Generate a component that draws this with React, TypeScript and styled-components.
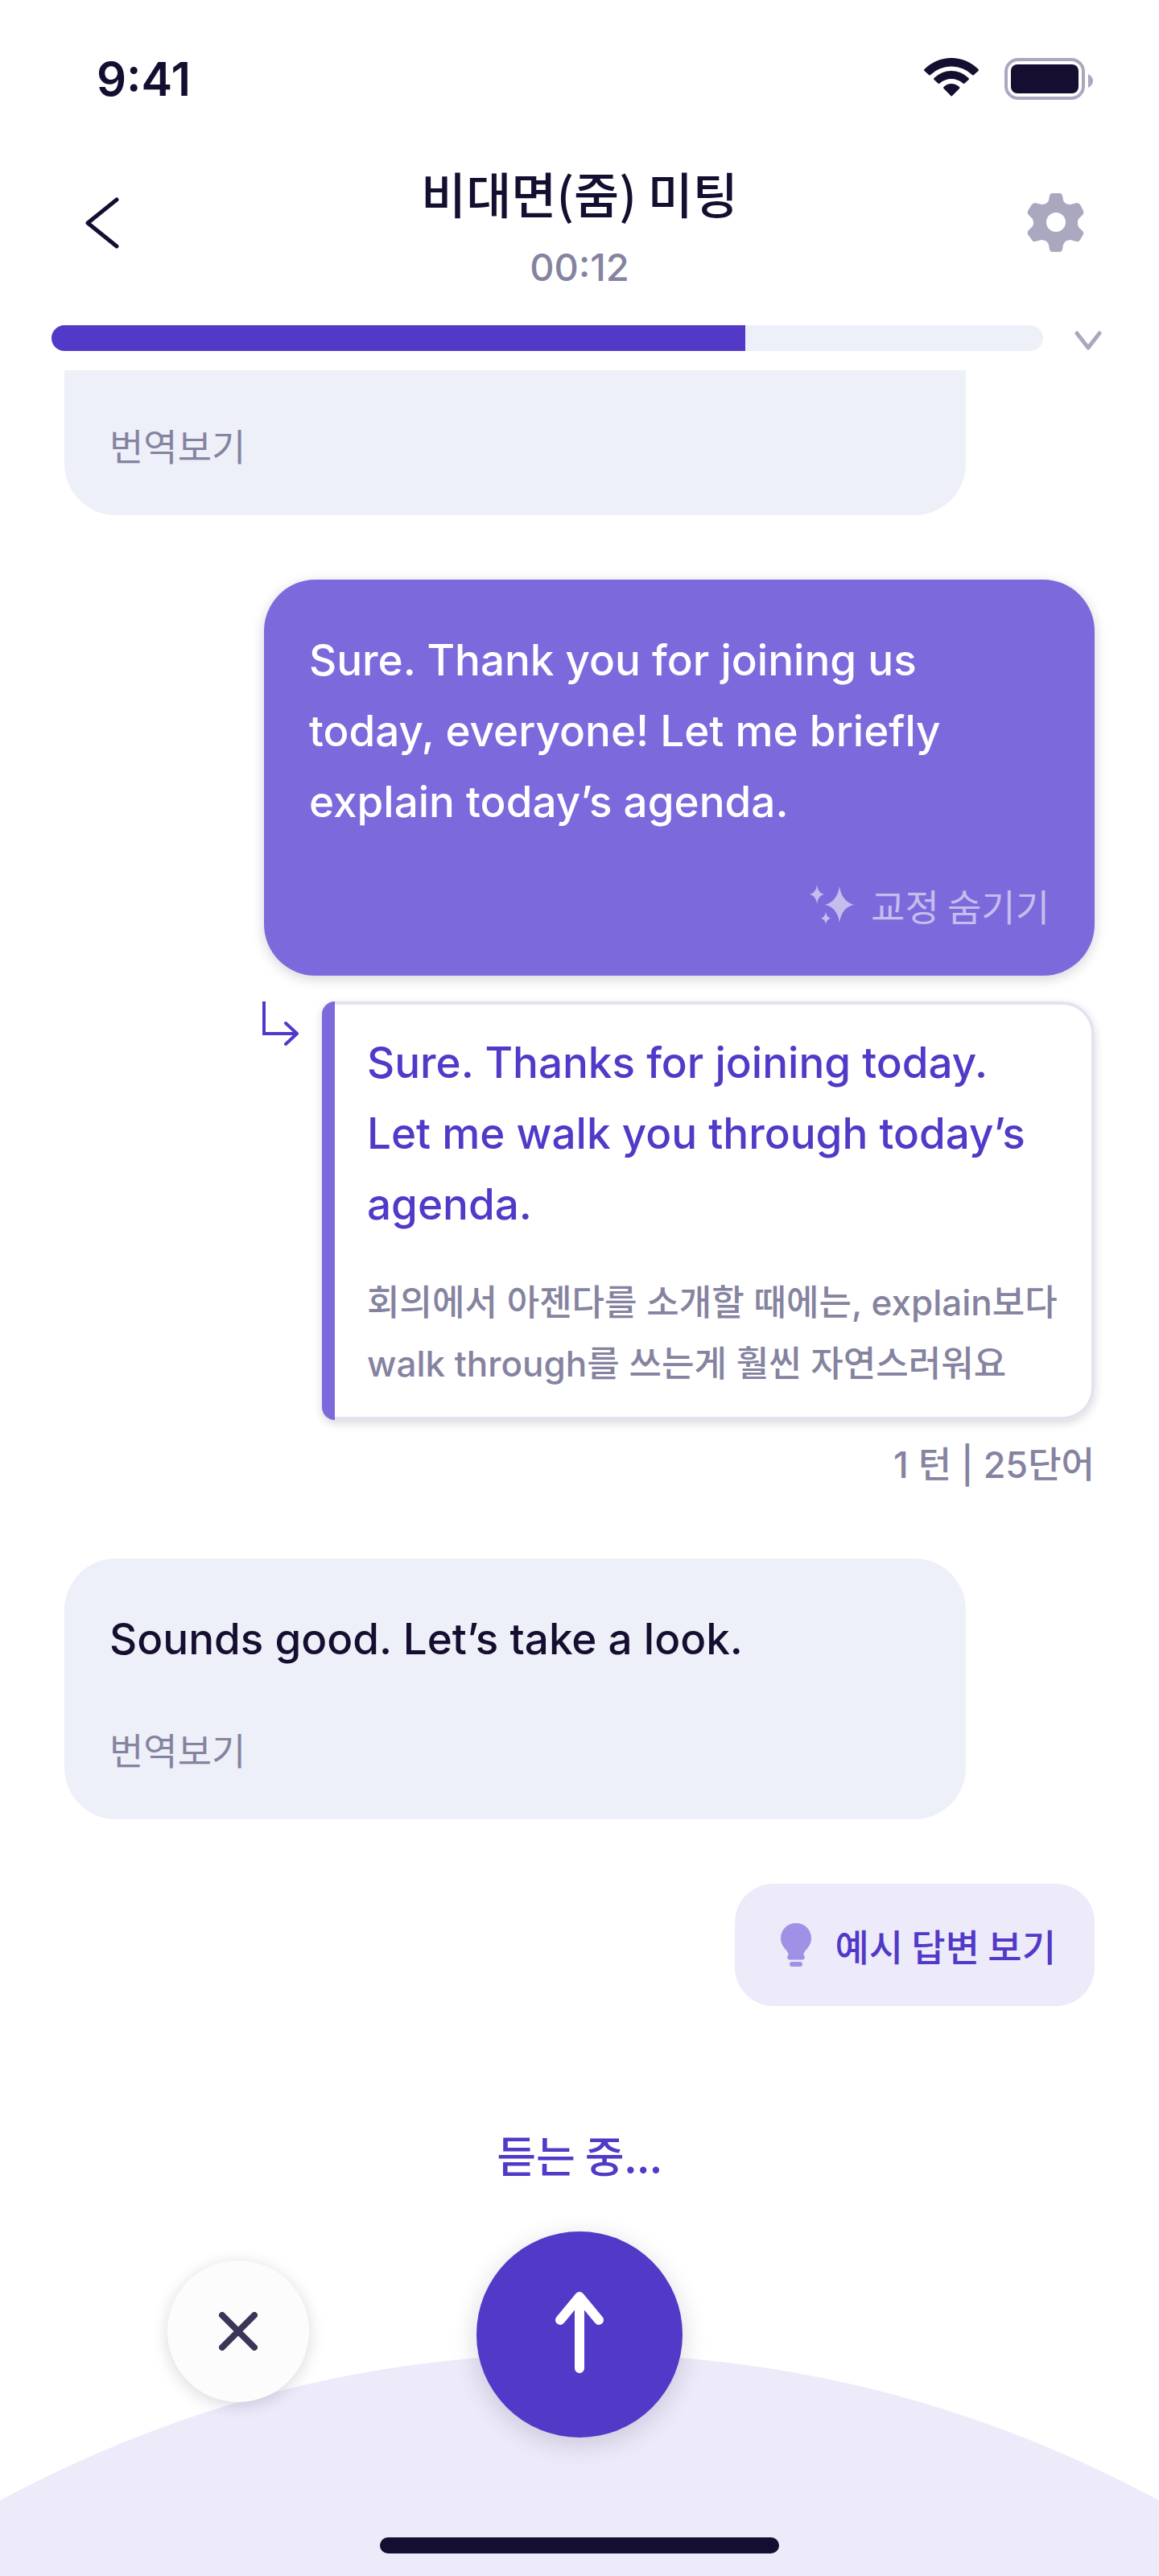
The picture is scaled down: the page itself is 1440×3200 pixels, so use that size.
import React from 'react';
import styled, { createGlobalStyle } from 'styled-components';

const ink = '#150e30';
const muted = '#8583a0';
const faint = '#a9a8bf';
const primary = '#5239c8';
const violet = '#7c69dc';
const mist = '#edf0f8';
const lilac = '#edeafa';
const korean = "'Noto Sans CJK KR', sans-serif";
const latin = "Inter, 'Noto Sans CJK KR', sans-serif";

const GlobalStyle = createGlobalStyle`
  *, *::before, *::after { box-sizing: border-box; }
  body { margin: 0; background: #fff; color: ${ink}; font-family: ${latin}; }
  button { border: 0; padding: 0; background: none; color: inherit; font: inherit; cursor: pointer; }
  h1, p { margin: 0; font-weight: inherit; }
  svg { display: block; flex: none; }
`;

const Screen = styled.div`
  display: flex;
  flex-direction: column;
  min-height: 100vh;
  overflow: hidden;
`;

const StatusBar = styled.div`
  display: flex;
  align-items: center;
  justify-content: space-between;
  height: 192px;
  padding: 4px 82px 0 120px;
`;

const Clock = styled.time`
  font-size: 58px;
  line-height: 72px;
  font-weight: 600;
`;

const StatusIcons = styled.div`
  display: flex;
  align-items: flex-start;
  gap: 32px;
`;

const Header = styled.header`
  display: flex;
  align-items: center;
  justify-content: space-between;
  height: 168px;
  padding: 2px 80px 0;
`;

const IconButton = styled.button`
  display: grid;
  place-items: center;
  width: 96px;
  height: 96px;
`;

const Heading = styled.div`
  display: flex;
  flex-direction: column;
  align-items: center;
  gap: 10px;
  padding-top: 8px;
`;

const Title = styled.h1`
  font-family: ${korean};
  font-size: 61px;
  line-height: 92px;
  font-weight: 500;
`;

const Timer = styled.time`
  font-size: 47px;
  line-height: 72px;
  font-weight: 500;
  color: ${muted};
`;

const ProgressRow = styled.div`
  display: flex;
  align-items: center;
  gap: 16px;
  height: 100px;
  padding: 20px 48px 0 64px;
`;

const Track = styled.div`
  flex: 1;
  height: 32px;
  border-radius: 16px;
  background: ${mist};
  overflow: hidden;
`;

const Fill = styled.div`
  height: 100%;
  background: ${primary};
`;

const ExpandButton = styled.button`
  display: grid;
  place-items: center;
  width: 80px;
  height: 32px;
`;

const Chat = styled.main`
  display: flex;
  flex-direction: column;
  align-items: flex-start;
  gap: 80px;
  padding: 0 80px;
`;

const Incoming = styled.section<{ $cut?: boolean }>`
  display: flex;
  flex-direction: column;
  align-items: flex-start;
  gap: 56px;
  width: 1120px;
  max-width: 100%;
  padding: 56px 56px 52px;
  border-radius: ${(p) => (p.$cut ? '0 0 64px 64px' : '64px')};
  background: ${mist};
`;

const Message = styled.p`
  font-size: 53px;
  line-height: 88px;
  font-weight: 500;
`;

const TextButton = styled.button`
  display: flex;
  align-items: center;
  gap: 20px;
  color: ${muted};
  font-family: ${korean};
  font-size: 46px;
  line-height: 72px;
  font-weight: 400;
`;

const Turn = styled.section`
  display: flex;
  flex-direction: column;
  align-items: flex-end;
  align-self: stretch;
`;

const Outgoing = styled.div`
  display: flex;
  flex-direction: column;
  gap: 48px;
  width: 1032px;
  max-width: 100%;
  padding: 56px 56px 52px;
  border-radius: 64px;
  background: ${violet};
  color: #fff;
  box-shadow: 0 4px 16px rgba(21, 14, 48, 0.18);

  ${TextButton} {
    align-self: flex-end;
    color: #c5bdec;
  }
`;

const Correction = styled.div`
  display: flex;
  align-items: flex-start;
  gap: 28px;
  width: 1034px;
  max-width: 100%;
  margin-top: 32px;
`;

const Card = styled.div`
  flex: 1;
  display: flex;
  border-radius: 16px 40px 40px 16px;
  background: #fff;
  overflow: hidden;
  box-shadow: 0 4px 12px rgba(21, 14, 48, 0.16);
`;

const CardEdge = styled.div`
  flex: none;
  width: 16px;
  background: ${violet};
`;

const CardBody = styled.div`
  flex: 1;
  display: flex;
  flex-direction: column;
  gap: 40px;
  padding: 28px 32px 28px 40px;
  border: 4px solid #e4e2f0;
  border-left: 0;
  border-radius: 0 40px 40px 0;
`;

const Better = styled(Message)`
  color: ${primary};
`;

const Note = styled.p`
  color: ${muted};
  font-size: 44px;
  line-height: 76px;
  font-weight: 500;
`;

const Stats = styled.p`
  margin-top: 20px;
  color: ${muted};
  font-size: 45px;
  line-height: 72px;
  font-weight: 500;
`;

const HintButton = styled.button`
  display: flex;
  align-items: center;
  align-self: flex-end;
  gap: 20px;
  height: 152px;
  padding: 0 48px;
  border-radius: 48px;
  background: ${lilac};
  color: ${primary};
  font-family: ${korean};
  font-size: 46px;
  line-height: 72px;
  font-weight: 500;
`;

const Dock = styled.footer`
  position: relative;
  flex: 1;
  display: flex;
  flex-direction: column;
  align-items: center;
  margin-top: 136px;
`;

const Dome = styled.svg`
  position: absolute;
  left: 0;
  bottom: 0;
  width: 100%;
  height: 276px;
`;

const Listening = styled.p`
  color: ${primary};
  font-family: ${korean};
  font-size: 53px;
  line-height: 96px;
  font-weight: 500;
`;

const Controls = styled.div`
  position: relative;
  display: grid;
  grid-template-columns: 1fr 256px 1fr;
  align-items: center;
  justify-items: center;
  align-self: stretch;
  margin-top: 48px;
`;

const Side = styled.div`
  padding-bottom: 8px;
`;

const RoundButton = styled.button<{ $size: number; $main?: boolean }>`
  display: grid;
  place-items: center;
  width: ${(p) => p.$size}px;
  height: ${(p) => p.$size}px;
  border-radius: 50%;
  background: ${(p) => (p.$main ? primary : '#fcfcfd')};
  box-shadow: ${(p) => (p.$main ? '0 8px 32px' : '0 4px 20px')} rgba(21, 14, 48, 0.16);
`;

const HomeBar = styled.div`
  position: relative;
  width: 496px;
  height: 20px;
  margin-top: auto;
  margin-bottom: 28px;
  border-radius: 10px;
  background: ${ink};
`;

export default function App() {
  const progress = 70;
  return (
    <Screen>
      <GlobalStyle />
      <StatusBar>
        <Clock>9:41</Clock>
        <StatusIcons>
          <svg width="68" height="48" viewBox="0 0 68 48" fill={ink} aria-hidden="true">
            <path d="M0.500 14Q15 0 34 0T67.500 14Q68.500 15 67.500 16L62 21Q61 22 60 21Q49 10.500 34 10.500T8 21Q7 22 6 21L0.500 16Q-0.500 15 0.500 14Z" />
            <path d="M12.500 25Q22 16 34 16T55.500 25Q56.500 26 55.500 27L50.500 31.500Q49.500 32.500 48.500 31.500Q42 26 34 26T19.500 31.500Q18.500 32.500 17.500 31.500L12.500 27Q11.500 26 12.500 25Z" />
            <path d="M24.500 36Q28.500 32 34 32T44 36Q45 37 44 38L35 47Q34.200 48 33.400 47L24.500 38Q23.500 37 24.500 36Z" />
          </svg>
          <svg width="110" height="52" viewBox="0 0 110 52" aria-hidden="true">
            <rect x="2" y="2" width="96" height="48" rx="15" fill="none" stroke={faint} strokeWidth="4" />
            <rect x="8" y="8" width="84" height="36" rx="8" fill={ink} />
            <path d="M104 20Q110 23 110 28.500Q110 34 104 37Z" fill={faint} />
          </svg>
        </StatusIcons>
      </StatusBar>

      <Header>
        <IconButton aria-label="뒤로">
          <svg width="44" height="64" viewBox="2 0 44 64" fill="none" stroke={ink} strokeWidth="5" strokeLinecap="round" strokeLinejoin="round" aria-hidden="true">
            <path d="M41 3L5 32L41 61" />
          </svg>
        </IconButton>
        <Heading>
          <Title>비대면(줌) 미팅</Title>
          <Timer>00:12</Timer>
        </Heading>
        <IconButton aria-label="설정">
          <svg width="72" height="74" viewBox="0 0 72 74" aria-hidden="true">
            <path fill={faint} fillRule="evenodd" d="M31 0H41Q43 0 44 3L45 9Q47 14 54 14L62 12Q64 12 66 14L70 22Q71 25 69 27L64 32Q62 37 64 42L69 47Q71 49 70 51L66 58Q64 61 61 60L54 58Q47 58 45 64L44 70Q43 73 41 73H31Q29 73 28 70L27 64Q25 58 18 58L10 60Q8 61 6 58L1 51Q0 48 2 46L7 41Q9 37 7 32L2 27Q0 25 1 22L6 14Q8 12 10 12L18 14Q25 14 27 9L28 3Q29 0 31 0ZM36 24A12 12 0 1 0 36 48A12 12 0 1 0 36 24Z" />
          </svg>
        </IconButton>
      </Header>

      <ProgressRow>
        <Track role="progressbar" aria-label="진행률" aria-valuenow={progress} aria-valuemin={0} aria-valuemax={100}>
          <Fill style={{ width: `${progress}%` }} />
        </Track>
        <ExpandButton aria-label="펼치기">
          <svg width="34" height="30" viewBox="0 -6 34 30" fill="none" stroke={faint} strokeWidth="5" strokeLinecap="round" strokeLinejoin="round" aria-hidden="true">
            <path d="M3 3L17 21L31 3" />
          </svg>
        </ExpandButton>
      </ProgressRow>

      <Chat>
        <Incoming $cut>
          <TextButton>번역보기</TextButton>
        </Incoming>

        <Turn>
          <Outgoing>
            <Message>
              Sure. Thank you for joining us<br />
              today, everyone! Let me briefly<br />
              explain today’s agenda.
            </Message>
            <TextButton>
              <svg width="56" height="50" viewBox="0 0 56 50" fill="currentColor" aria-hidden="true">
                <path d="M37 2Q40 21 55 25Q40 28 37 47Q34 28 19 25Q34 21 37 2Z" />
                <path d="M9 0Q10 10 18 12Q10 14 9 24Q8 14 0 12Q8 10 9 0Z" />
                <path d="M20 34Q21 40 26 42Q21 43 20 49Q19 43 14 42Q19 40 20 34Z" />
              </svg>
              교정 숨기기
            </TextButton>
          </Outgoing>
          <Correction>
            <svg width="46" height="58" viewBox="0 0 46 58" fill="none" stroke={primary} strokeWidth="4" aria-hidden="true">
              <path d="M2 0V40H42" />
              <path d="M29 27L43 40L29 53" strokeLinecap="round" strokeLinejoin="round" />
            </svg>
            <Card>
              <CardEdge />
              <CardBody>
                <Better>
                  Sure. Thanks for joining today.<br />
                  Let me walk you through today’s<br />
                  agenda.
                </Better>
                <Note>
                  회의에서 아젠다를 소개할 때에는, explain보다<br />
                  walk through를 쓰는게 훨씬 자연스러워요
                </Note>
              </CardBody>
            </Card>
          </Correction>
          <Stats>1 턴 | 25단어</Stats>
        </Turn>

        <Incoming>
          <Message>Sounds good. Let’s take a look.</Message>
          <TextButton>번역보기</TextButton>
        </Incoming>

        <HintButton>
          <svg width="56" height="56" viewBox="0 0 56 56" fill="#a091e6" aria-hidden="true">
            <path d="M28 1C17 1 9 9 9 20C9 30 17 34 18.500 39Q19 41 17.500 42Q16.500 46 20 46.500H36Q39.500 46 38.500 42Q37 41 37.500 39C39 34 47 30 47 20C47 9 39 1 28 1Z" />
            <rect x="20" y="49" width="16" height="6" rx="3" />
          </svg>
          예시 답변 보기
        </HintButton>
      </Chat>

      <Dock>
        <Dome viewBox="0 0 1440 276" preserveAspectRatio="none" aria-hidden="true">
          <path d="M0 182Q340 0 720 0T1440 182V276H0Z" fill={lilac} />
        </Dome>
        <Listening role="status">듣는 중...</Listening>
        <Controls>
          <Side>
            <RoundButton $size={176} aria-label="취소">
              <svg width="48" height="48" viewBox="0 0 48 48" stroke="#3b3658" strokeWidth="8" strokeLinecap="round" aria-hidden="true">
                <path d="M4 4L44 44M44 4L4 44" />
              </svg>
            </RoundButton>
          </Side>
          <RoundButton $size={256} $main aria-label="보내기">
            <svg width="62" height="106" viewBox="0 0 62 106" fill="none" stroke="#fff" strokeWidth="12" strokeLinecap="round" strokeLinejoin="round" aria-hidden="true">
              <path d="M31 95V6M7 35L31 6L55 35" />
            </svg>
          </RoundButton>
        </Controls>
        <HomeBar />
      </Dock>
    </Screen>
  );
}
